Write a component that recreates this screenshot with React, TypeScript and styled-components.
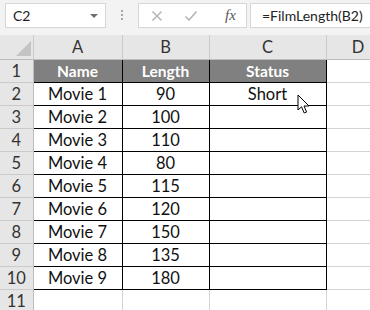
import React from "react";
import styled, { createGlobalStyle } from "styled-components";

const Global = createGlobalStyle`
  html, body { margin: 0; padding: 0; background: #ffffff; }
  body { width: 370px; height: 310px; overflow: hidden; font-family: Lato, "Open Sans", sans-serif; }
`;

const Page = styled.div`
  position: relative;
  width: 370px;
  height: 310px;
  overflow: hidden;
  background: #ffffff;
`;

const Toolbar = styled.div`
  display: flex;
  align-items: flex-start;
  height: 35px;
  padding-top: 3px;
  box-sizing: border-box;
  background: #f3f3f3;
`;

const Box = styled.div<{ $w: number; $ml: number }>`
  display: flex;
  align-items: center;
  box-sizing: border-box;
  width: ${(p) => p.$w}px;
  margin-left: ${(p) => p.$ml}px;
  height: 25px;
  background: #ffffff;
  border: 1px solid #d6d6d6;
  font-size: 14px;
  color: #222;
  flex-shrink: 0;
`;

const NameText = styled.span`
  flex: 1;
  padding-left: 7px;
`;

const DropArrow = styled.span`
  width: 0;
  height: 0;
  margin-right: 7px;
  border-left: 4px solid transparent;
  border-right: 4px solid transparent;
  border-top: 4px solid #6e6e6e;
`;

const Dots = styled.div`
  display: flex;
  flex-direction: column;
  gap: 2px;
  margin-left: 15px;
  margin-top: 7px;
  span {
    width: 2px;
    height: 2px;
    background: #a6a6a6;
  }
`;

const FuncIcon = styled.span<{ $w: number }>`
  display: flex;
  justify-content: center;
  width: ${(p) => p.$w}px;
`;

const Fx = styled.span`
  flex: 1;
  text-align: center;
  font-family: "Liberation Serif", "DejaVu Serif", serif;
  font-style: italic;
  font-size: 15px;
  color: #555;
  padding-left: 8px;
`;

const FormulaText = styled.span`
  padding-left: 11px;
  white-space: nowrap;
`;

const Sheet = styled.table`
  border-collapse: collapse;
  table-layout: fixed;
  width: 390px;
  font-size: 16.5px;
`;

const ColHead = styled.th`
  height: 24px;
  padding: 0;
  background: #e6e6e6;
  border-right: 1px solid #cacaca;
  border-bottom: 1px solid #bdbdbd;
  font-weight: normal;
  color: #333;
  font-size: 16.5px;
  text-align: center;
  vertical-align: middle;
`;

const Corner = styled(ColHead)`
  position: relative;
`;

const CornerTri = styled.div`
  position: absolute;
  right: 2px;
  bottom: 3px;
  width: 0;
  height: 0;
  border-left: 15px solid transparent;
  border-bottom: 15px solid #c4c4c4;
`;

const RowHead = styled.td`
  height: 22px;
  padding: 0;
  background: #e6e6e6;
  border-bottom: 1px solid #cacaca;
  border-right: 1px solid #bdbdbd;
  color: #333;
  font-size: 16.5px;
  text-align: center;
`;

const Cell = styled.td<{ $head?: boolean; $in?: boolean }>`
  height: 22px;
  padding: 0;
  text-align: center;
  white-space: nowrap;
  overflow: hidden;
  color: ${(p) => (p.$head ? "#ffffff" : "#111")};
  font-weight: ${(p) => (p.$head ? 700 : 400)};
  background: ${(p) => (p.$head ? "#808080" : "#ffffff")};
  border: 1px solid ${(p) => (p.$in ? "#000000" : "#d4d4d4")};
  ${(p) => (p.$head ? "font-size: 15.5px;" : "")}
`;

const Cursor = styled.svg`
  position: absolute;
  left: 297px;
  top: 94px;
`;

const rows = [
  ["Movie 1", "90", "Short"],
  ["Movie 2", "100", ""],
  ["Movie 3", "110", ""],
  ["Movie 4", "80", ""],
  ["Movie 5", "115", ""],
  ["Movie 6", "120", ""],
  ["Movie 7", "150", ""],
  ["Movie 8", "135", ""],
  ["Movie 9", "180", ""],
];

const widths = [33, 89, 87, 117, 64];

export default function App() {
  return (
    <Page>
      <Global />
      <Toolbar>
        <Box $w={101} $ml={5}>
          <NameText>C2</NameText>
          <DropArrow />
        </Box>
        <Dots>
          <span />
          <span />
          <span />
        </Dots>
        <Box $w={109} $ml={15}>
          <FuncIcon $w={36}>
            <svg width="12" height="12" viewBox="0 0 12 12">
              <path d="M1.5 1.5 L10.5 10.5 M10.5 1.5 L1.5 10.5" stroke="#b8b8b8" strokeWidth="1.6" fill="none" />
            </svg>
          </FuncIcon>
          <FuncIcon $w={32}>
            <svg width="14" height="12" viewBox="0 0 14 12">
              <path d="M1.5 6.5 L5 10 L12.5 1.5" stroke="#b8b8b8" strokeWidth="1.7" fill="none" />
            </svg>
          </FuncIcon>
          <Fx>fx</Fx>
        </Box>
        <Box $w={124} $ml={3}>
          <FormulaText>=FilmLength(B2)</FormulaText>
        </Box>
      </Toolbar>
      <Sheet>
        <colgroup>
          {widths.map((w, i) => (
            <col key={i} style={{ width: w }} />
          ))}
        </colgroup>
        <thead>
          <tr>
            <Corner>
              <CornerTri />
            </Corner>
            <ColHead>A</ColHead>
            <ColHead>B</ColHead>
            <ColHead>C</ColHead>
            <ColHead>D</ColHead>
          </tr>
        </thead>
        <tbody>
          <tr>
            <RowHead>1</RowHead>
            <Cell $head $in>Name</Cell>
            <Cell $head $in>Length</Cell>
            <Cell $head $in>Status</Cell>
            <Cell />
          </tr>
          {rows.map((r, i) => (
            <tr key={i}>
              <RowHead>{i + 2}</RowHead>
              <Cell $in>{r[0]}</Cell>
              <Cell $in>{r[1]}</Cell>
              <Cell $in>{r[2]}</Cell>
              <Cell />
            </tr>
          ))}
          <tr>
            <RowHead>11</RowHead>
            <Cell />
            <Cell />
            <Cell />
            <Cell />
          </tr>
        </tbody>
      </Sheet>
      <Cursor width="14" height="21" viewBox="0 0 14 21">
        <path
          d="M1 1 L1 16 L4.5 12.8 L7.2 19 L9.6 18 L7 12 L12 12 Z"
          fill="#ffffff"
          stroke="#000000"
          strokeWidth="1"
          strokeLinejoin="miter"
        />
      </Cursor>
    </Page>
  );
}
